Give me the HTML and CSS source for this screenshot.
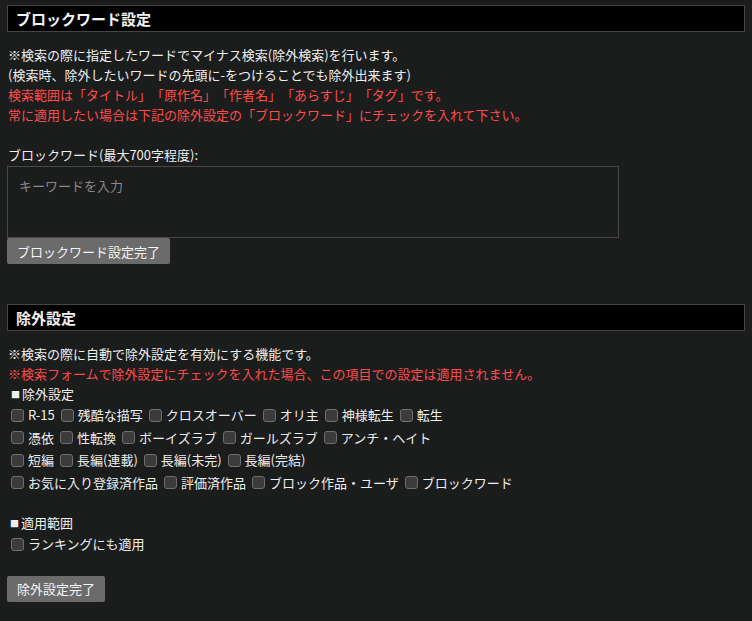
FILE: index.html
```html
<!DOCTYPE html>
<html lang="ja">

<head>
    <meta charset="UTF-8">
    <meta name="viewport" content="width=device-width, initial-scale=1.0">
    <title>ブロックワード設定</title>
    <link rel="stylesheet" href="styles.css">
</head>

<body>
    <div class="wrap">
        <!-- Block word -->
        <h2 class="box-title">ブロックワード設定</h2>
        <div class="notes">
            <p>※検索の際に指定したワードでマイナス検索(除外検索)を行います。</p>
            <p>(検索時、除外したいワードの先頭に-をつけることでも除外出来ます)</p>
            <p class="warn">検索範囲は「タイトル」「原作名」「作者名」「あらすじ」「タグ」です。</p>
            <p class="warn">常に適用したい場合は下記の除外設定の「ブロックワード」にチェックを入れて下さい。</p>
        </div>
        <form class="block-form">
            <label class="field-label" for="words">ブロックワード(最大700字程度):</label>
            <textarea id="words" placeholder="キーワードを入力"></textarea>
            <button type="button" class="btn">ブロックワード設定完了</button>
        </form>

        <!-- Exclusion -->
        <h2 class="box-title second">除外設定</h2>
        <div class="notes">
            <p>※検索の際に自動で除外設定を有効にする機能です。</p>
            <p class="warn">※検索フォームで除外設定にチェックを入れた場合、この項目での設定は適用されません。</p>
            <p class="sub"><span class="sq">■</span>除外設定</p>
        </div>
        <div class="checks">
            <div class="row">
                <label><input type="checkbox">R-15</label>
                <label><input type="checkbox">残酷な描写</label>
                <label><input type="checkbox">クロスオーバー</label>
                <label><input type="checkbox">オリ主</label>
                <label><input type="checkbox">神様転生</label>
                <label><input type="checkbox">転生</label>
            </div>
            <div class="row">
                <label><input type="checkbox">憑依</label>
                <label><input type="checkbox">性転換</label>
                <label><input type="checkbox">ボーイズラブ</label>
                <label><input type="checkbox">ガールズラブ</label>
                <label><input type="checkbox">アンチ・ヘイト</label>
            </div>
            <div class="row">
                <label><input type="checkbox">短編</label>
                <label><input type="checkbox">長編(連載)</label>
                <label><input type="checkbox">長編(未完)</label>
                <label><input type="checkbox">長編(完結)</label>
            </div>
            <div class="row">
                <label><input type="checkbox">お気に入り登録済作品</label>
                <label><input type="checkbox">評価済作品</label>
                <label><input type="checkbox">ブロック作品・ユーザ</label>
                <label><input type="checkbox">ブロックワード</label>
            </div>
        </div>

        <p class="sub range"><span class="sq">■</span>適用範囲</p>
        <div class="checks">
            <div class="row">
                <label><input type="checkbox">ランキングにも適用</label>
            </div>
        </div>

        <button type="button" class="btn done">除外設定完了</button>
    </div>
</body>

</html>
```

FILE: styles.css
```css
body {
    margin: 0;
    background-color: #1b1c1c;
    color: #eeeeee;
    font-family: "Noto Sans CJK JP", "Noto Sans", sans-serif;
    font-size: 13px;
    line-height: 20px;
    text-spacing-trim: space-all;
}

.wrap {
    padding: 5px 7px;
}

p {
    margin: 0;
}

.box-title {
    margin: 0;
    height: 25px;
    line-height: 25px;
    padding: 0 8px;
    background-color: #000;
    border: 1px solid #454545;
    color: #f2f2f2;
    font-size: 15px;
    font-weight: bold;
}

.box-title.second {
    margin-top: 40px;
}

.notes {
    margin-top: 13px;
    padding-left: 1px;
}

.warn {
    color: #ff4c4c;
}

.block-form {
    margin-top: 20px;
}

.field-label {
    display: block;
    padding-left: 1px;
}

textarea {
    display: block;
    box-sizing: border-box;
    width: 612px;
    height: 72px;
    margin-top: 1px;
    padding: 9px 11px;
    background-color: #1b1c1c;
    border: 1px solid #474747;
    color: #eee;
    font-family: inherit;
    font-size: 13px;
    line-height: 20px;
    resize: none;
}

textarea::placeholder {
    color: #8a8a8a;
}

.btn {
    display: block;
    height: 26px;
    padding: 0 10px;
    background-color: #6b6b6b;
    border: none;
    border-radius: 2px;
    color: #f4f4f4;
    font-family: inherit;
    font-size: 13px;
}

.btn.done {
    margin-top: 20px;
}

.checks .row {
    display: flex;
    align-items: center;
    height: 22.5px;
    padding-left: 3px;
}

.checks label {
    display: flex;
    align-items: center;
    margin-right: 5px;
    white-space: nowrap;
}

.checks input {
    appearance: none;
    width: 13px;
    height: 13px;
    margin: 0 4px 0 1px;
    background-color: #3b3b3b;
    border: 1px solid #6e6e6e;
    border-radius: 3px;
}

.sub {
    padding-left: 1px;
}

.sq {
    display: inline-block;
    width: 13px;
    font-size: 9px;
    line-height: 20px;
    text-align: center;
    vertical-align: top;
    position: relative;
    top: 1px;
}

.range {
    margin-top: 19px;
}
```
